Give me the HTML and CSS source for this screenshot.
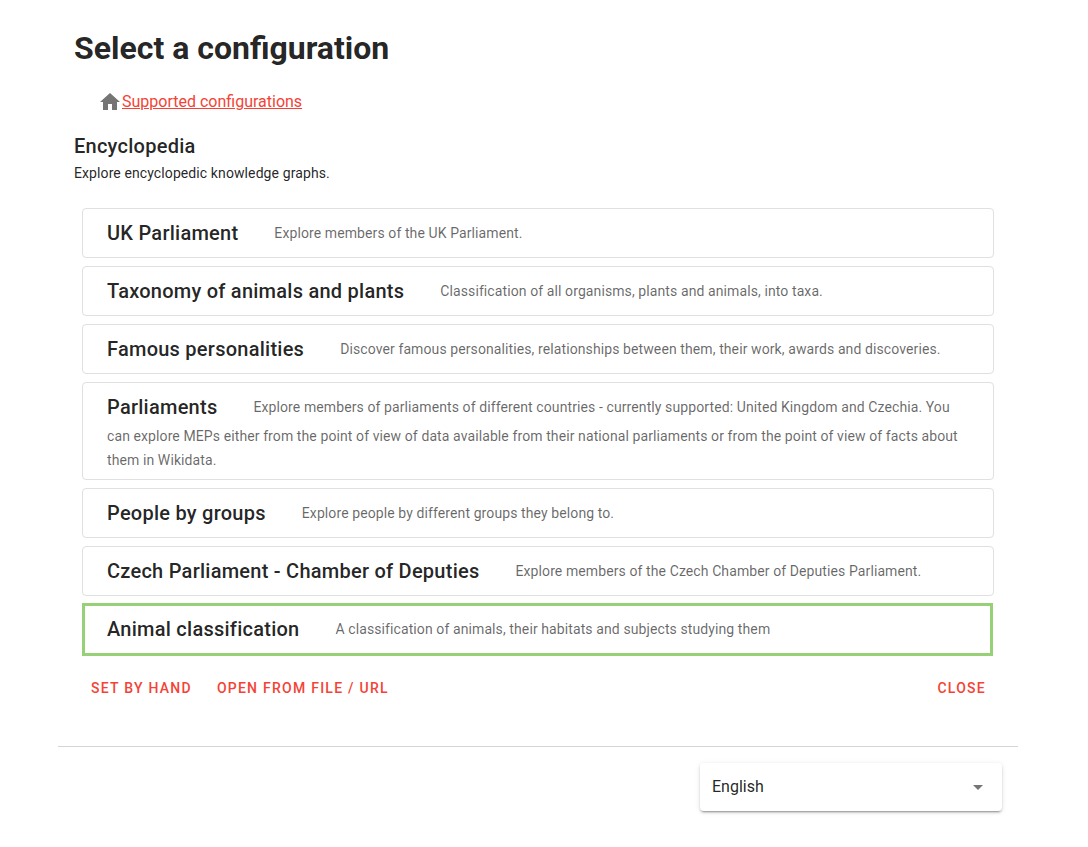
FILE: index.html
```html
<!DOCTYPE html>
<html lang="en">
<head>
<meta charset="utf-8">
<title>Select a configuration</title>
<link rel="stylesheet" href="styles.css">
</head>
<body>
<main class="container">
  <h1 class="title">Select a configuration</h1>
  <nav class="breadcrumbs" aria-label="Breadcrumb">
    <svg class="home" viewBox="0 0 24 24" aria-hidden="true"><path d="M10,20V14H14V20H19V12H22L12,3L2,12H5V20H10Z"/></svg>
    <a href="#">Supported configurations</a>
  </nav>
  <h2 class="subtitle">Encyclopedia</h2>
  <p class="intro">Explore encyclopedic knowledge graphs.</p>
  <div class="cards">
    <article class="card"><h3>UK Parliament</h3><p>Explore members of the UK Parliament.</p></article>
    <article class="card"><h3>Taxonomy of animals and plants</h3><p>Classification of all organisms, plants and animals, into taxa.</p></article>
    <article class="card"><h3>Famous personalities</h3><p>Discover famous personalities, relationships between them, their work, awards and discoveries.</p></article>
    <article class="card"><h3>Parliaments</h3><p>Explore members of parliaments of different countries - currently supported: United Kingdom and Czechia. You can explore MEPs either from the point of view of data available from their national parliaments or from the point of view of facts about them in Wikidata.</p></article>
    <article class="card"><h3>People by groups</h3><p>Explore people by different groups they belong to.</p></article>
    <article class="card"><h3>Czech Parliament - Chamber of Deputies</h3><p>Explore members of the Czech Chamber of Deputies Parliament.</p></article>
    <article class="card selected"><h3>Animal classification</h3><p>A classification of animals, their habitats and subjects studying them</p></article>
  </div>
  <div class="actions">
    <button type="button">Set by hand</button>
    <button type="button">Open from file / URL</button>
    <button type="button" class="close">Close</button>
  </div>
</main>
<footer class="footer">
  <div class="language">
    <select aria-label="Language"><option>English</option></select>
    <svg class="arrow" viewBox="0 0 24 24" aria-hidden="true"><path d="M7,10L12,15L17,10H7Z"/></svg>
  </div>
</footer>
</body>
</html>
```

FILE: styles.css
```css
* { box-sizing: border-box; }
body {
  margin: 0;
  padding: 0 70px 0 58px;
  background: #fff;
  color: rgba(0, 0, 0, 0.87);
  font: 16px/24px Roboto, sans-serif;
}
h1, h2, h3, p { margin: 0; }
.container { padding: 24px 16px 40px; }
.title { font-size: 32px; line-height: 48px; font-weight: 700; }
.breadcrumbs {
  display: flex;
  align-items: center;
  margin-top: 18px;
  padding-left: 24px;
}
.home { width: 24px; height: 24px; fill: #757575; }
a { color: #f44336; }
.subtitle {
  margin-top: 16px;
  font-size: 20px;
  line-height: 32px;
  font-weight: 500;
  letter-spacing: 0.0125em;
}
.intro { font-size: 14px; line-height: 22px; letter-spacing: 0.0071em; }
.cards {
  display: grid;
  gap: 8px;
  margin-top: 24px;
  padding: 0 8px;
}
.card {
  padding: 8px 24px;
  border: 1px solid #e0e0e0;
  border-radius: 4px;
}
.card h3 {
  display: inline;
  margin-right: 36px;
  font-size: 20px;
  line-height: 32px;
  font-weight: 500;
  letter-spacing: 0.0125em;
  vertical-align: middle;
}
.card p {
  display: inline;
  font-size: 14px;
  line-height: 22px;
  letter-spacing: 0.0071em;
  color: rgba(0, 0, 0, 0.6);
  vertical-align: middle;
}
.selected {
  margin: -1px 1px -2px 0;
  padding: 7px 22px 8px;
  border: 3px solid #98d078;
  border-radius: 0;
}
.actions { display: flex; gap: 9px; margin-top: 16px; padding: 0 8px 0 9px; }
button {
  height: 36px;
  padding: 0 8px;
  border: 0;
  background: none;
  color: #f44336;
  font: 500 14px/20px Roboto, sans-serif;
  letter-spacing: 0.0893em;
  text-transform: uppercase;
}
.close { margin-left: auto; }
.footer {
  display: flex;
  justify-content: flex-end;
  padding: 16px;
  border-top: 1px solid #d5d5d5;
}
.language { position: relative; width: 302px; }
select {
  display: block;
  width: 100%;
  height: 48px;
  padding: 0 12px;
  border: 0;
  border-radius: 4px;
  background: #fff;
  color: inherit;
  font: inherit;
  appearance: none;
  box-shadow: 0 3px 1px -2px rgba(0,0,0,.2), 0 2px 2px 0 rgba(0,0,0,.14), 0 1px 5px 0 rgba(0,0,0,.12);
}
.arrow {
  position: absolute;
  top: 12px;
  right: 12px;
  width: 24px;
  height: 24px;
  fill: #757575;
  pointer-events: none;
}
```
